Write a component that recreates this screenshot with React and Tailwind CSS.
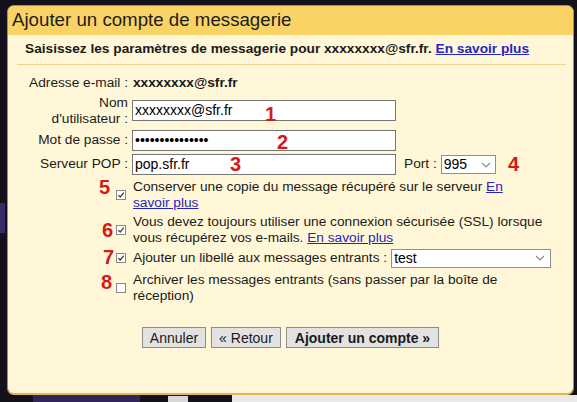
const Box = ({ checked }) => (
  <span className="inline-flex h-[10px] w-[10px] items-center justify-center border border-[#8a8a8a] bg-white">
    {checked && (
      <svg width="8" height="8" viewBox="0 0 8 8">
        <path d="M1.3 4.1 L3.2 6 L6.8 1.6" stroke="#3a3a3a" strokeWidth="1.2" fill="none" />
      </svg>
    )}
  </span>
);

const Chevron = () => (
  <svg width="10" height="6" viewBox="0 0 10 6" className="ml-auto">
    <path d="M1 1 L5 5 L9 1" stroke="#8a8a8a" strokeWidth="1.1" fill="none" />
  </svg>
);

const Link = ({ children }) => (
  <span className="text-[#2525c4] underline">{children}</span>
);

const Num = ({ n, className }) => (
  <span className={`absolute text-[20px] leading-none font-bold text-[#d21a1a] ${className}`}>{n}</span>
);

const Field = ({ children }) => (
  <div className="flex h-[21px] w-[264px] items-center border border-[#767676] bg-white px-[2px] text-[14px] text-black">
    {children}
  </div>
);

const CheckRow = ({ checked, height, children }) => (
  <div className={`flex items-center ${height}`}>
    <div className="flex w-[111px] justify-end pr-[2px]">
      <Box checked={checked} />
    </div>
    <div className="ml-[5px] whitespace-nowrap leading-[16px]">{children}</div>
  </div>
);

export default function App() {
  return (
    <div className="relative flex h-[402px] w-[577px] flex-col overflow-hidden bg-[#13111b] font-['Liberation_Sans',Arial,sans-serif] text-[13.7px] text-[#1a1a1a]">
      <div className="h-[5px]" />
      <div className="flex h-[390px]">
        <div className="flex w-[7px] flex-col">
          <div className="h-[198px]" />
          <div className="h-[30px] w-[5px] bg-[#3a2a66]" />
        </div>
        <div className="flex w-[567px] flex-col overflow-hidden rounded-[7px] border border-[#a88f4e] border-b-2 border-b-[#e2b94f] bg-[#fff7d7]">
          <div className="flex h-[29px] items-center bg-[#fad366] pl-[4px] text-[18.7px] text-[#1c1c1c]">
            Ajouter un compte de messagerie
          </div>
          <div className="pl-[9px] pr-[7px]">
            <div className="flex h-[30px] items-center border-b border-[#efd48c] pl-[8px] font-bold whitespace-nowrap">
              Saisissez les paramètres de messagerie pour xxxxxxxx@sfr.fr.&nbsp;<Link>En savoir plus</Link>
            </div>
            <div className="pt-[8px]">
              <div className="flex h-[20px] items-center">
                <div className="w-[111px] text-right">Adresse e-mail :</div>
                <div className="ml-[5px] font-bold">xxxxxxxx@sfr.fr</div>
              </div>
              <div className="flex h-[35px] items-center">
                <div className="w-[111px] text-right leading-[16px]">
                  Nom
                  <br />
                  d'utilisateur :
                </div>
                <div className="ml-[4px]">
                  <Field>xxxxxxxx@sfr.fr</Field>
                </div>
              </div>
              <div className="flex h-[25px] items-center">
                <div className="w-[111px] text-right">Mot de passe :</div>
                <div className="ml-[4px]">
                  <Field>•••••••••••••••</Field>
                </div>
              </div>
              <div className="flex h-[23px] items-center">
                <div className="w-[111px] text-right">Serveur POP :</div>
                <div className="ml-[4px]">
                  <Field>pop.sfr.fr</Field>
                </div>
                <div className="ml-[8px]">Port :</div>
                <div className="ml-[4px] flex h-[19px] w-[55px] items-center border border-[#8f8f8f] bg-white pl-[2px] pr-[4px] text-[14px] text-black">
                  995
                  <Chevron />
                </div>
              </div>
              <CheckRow checked height="h-[37px]">
                Conserver une copie du message récupéré sur le serveur <Link>En</Link>
                <br />
                <Link>savoir plus</Link>
              </CheckRow>
              <CheckRow checked height="h-[34px]">
                Vous devez toujours utiliser une connexion sécurisée (SSL) lorsque
                <br />
                vous récupérez vos e-mails. <Link>En savoir plus</Link>
              </CheckRow>
              <div className="flex h-[22px] items-center">
                <div className="flex w-[111px] justify-end pr-[2px]">
                  <Box checked />
                </div>
                <div className="ml-[5px] whitespace-nowrap">Ajouter un libellé aux messages entrants :</div>
                <div className="ml-[4px] flex h-[19px] w-[160px] items-center border border-[#8f8f8f] bg-white pl-[2px] pr-[5px] text-[14px] text-black">
                  test
                  <Chevron />
                </div>
              </div>
              <CheckRow height="h-[38px]">
                Archiver les messages entrants (sans passer par la boîte de
                <br />
                réception)
              </CheckRow>
              <div className="mt-[20px] flex justify-center gap-[5px] pr-[2px] text-[14px] text-[#1a1a1a]">
                <button className="h-[21px] border border-[#8c8c8c] bg-[#e2e2e2] px-[7px] leading-none">Annuler</button>
                <button className="h-[21px] border border-[#8c8c8c] bg-[#e2e2e2] px-[7px] leading-none">« Retour</button>
                <button className="h-[21px] border border-[#8c8c8c] bg-[#e2e2e2] px-[8px] leading-none font-bold">Ajouter un compte »</button>
              </div>
            </div>
          </div>
        </div>
      </div>
      <div className="flex h-[7px]">
        <div className="w-[33px]" />
        <div className="w-[107px] bg-[#34245c]" />
        <div className="ml-[28px] mt-[1px] h-[6px] w-[20px] bg-[#d8d8d8]" />
        <div className="ml-[44px] w-[345px] bg-[#e9e9e9]" />
      </div>
      <Num n="1" className="left-[265px] top-[104px]" />
      <Num n="2" className="left-[277px] top-[132px]" />
      <Num n="3" className="left-[230px] top-[154px]" />
      <Num n="4" className="left-[508px] top-[154px]" />
      <Num n="5" className="left-[99px] top-[177px]" />
      <Num n="6" className="left-[102px] top-[220px]" />
      <Num n="7" className="left-[103px] top-[247px]" />
      <Num n="8" className="left-[101px] top-[272px]" />
    </div>
  );
}
